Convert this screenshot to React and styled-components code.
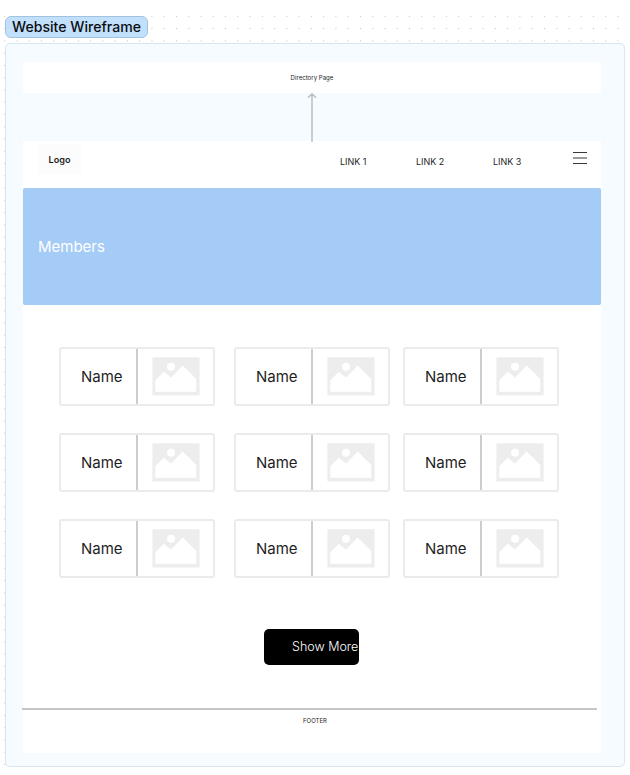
import React from "react";
import styled, { createGlobalStyle } from "styled-components";

const GlobalStyle = createGlobalStyle`
  * { box-sizing: border-box; }
  body { margin: 0; background: #fff; font-family: Inter, "Liberation Sans", sans-serif; color: #1e1e1e; }
`;

const Canvas = styled.main`
  width: 630px;
  height: 775px;
  padding: 15px 5px 8px 4px;
  overflow: hidden;
  background: radial-gradient(circle at center, #c6c6c6 0, #dcdcdc 0.6px, transparent 1px) -1.4px 10.2px / 12.28px 12.28px;
  background-clip: content-box;
  display: flex;
  flex-direction: column;
  align-items: flex-start;
`;

const SectionLabel = styled.h1`
  margin: 1px 0 5px 1px;
  height: 22px;
  width: 143px;
  border: 1px solid #a1c3df;
  border-radius: 6px;
  background: #c2e0fc;
  color: #0b0d10;
  display: flex;
  align-items: center;
  justify-content: center;
  font-size: 14.1px;
  font-weight: 550;
  line-height: 20px;
  white-space: nowrap;
`;

const Section = styled.section`
  width: 620px;
  height: 724px;
  margin-left: 1px;
  padding: 18px 17px 0;
  border: 1px solid #d4e6f1;
  border-radius: 5px;
  background: #f5fbff;
  display: flex;
  flex-direction: column;
  align-items: flex-start;
  flex: none;
`;

const DirectoryPage = styled.div`
  width: 578px;
  height: 31px;
  background: #fff;
  display: flex;
  align-items: center;
  justify-content: center;
  font-size: 6.1px;
`;

const Connector = styled.svg`
  display: block;
  width: 12px;
  height: 49px;
  margin: 0 0 -1px 283px;
  z-index: 1;
`;

const Page = styled.article`
  width: 578px;
  height: 612px;
  background: #fff;
  display: flex;
  flex-direction: column;
  flex: none;
`;

const Header = styled.header`
  height: 47px;
  padding: 3px 14px 0 15px;
  display: flex;
  justify-content: space-between;
  align-items: flex-start;
`;

const Logo = styled.div`
  width: 43px;
  height: 30px;
  background: #fcfcfc;
  display: flex;
  align-items: center;
  justify-content: center;
  font-size: 9.1px;
  font-weight: 600;
`;

const Nav = styled.nav`
  display: flex;
  align-items: flex-start;
`;

const NavLink = styled.a`
  width: ${({ $width }) => $width}px;
  padding-top: 12px;
  font-size: 9px;
  line-height: 12px;
`;

const MenuIcon = styled.svg`
  width: 14px;
  height: 14px;
  margin-top: 7px;
  display: block;
`;

const Hero = styled.div`
  height: 116.5px;
  padding: 1px 0 0 15px;
  border-radius: 2px;
  background: #a5cbf7;
  color: #fff;
  display: flex;
  align-items: center;
  font-size: 15px;
`;

const Members = styled.div`
  margin: 42.5px 0 0 36px;
  display: grid;
  grid-template-columns: 175px 169px 155px;
  grid-auto-rows: 59px;
  row-gap: 27px;
`;

const MemberCard = styled.div`
  width: 156px;
  height: 59px;
  border: 2px solid #ebebeb;
  border-radius: 3px;
  display: flex;
`;

const MemberName = styled.div`
  width: 77px;
  padding-left: 20px;
  border-right: 2px solid #cdcdcd;
  display: flex;
  align-items: center;
  font-size: 15px;
`;

const MemberPhoto = styled.svg`
  display: block;
  width: 48px;
  height: 39px;
  margin: 8px 0 0 14px;
`;

const ShowMore = styled.button`
  width: 95px;
  height: 36px;
  margin: 51px 0 0 241px;
  padding: 0 0 1px 28px;
  border: 0;
  border-radius: 5px;
  background: #000;
  color: #fff;
  font: 300 12.5px/16px Inter, "Liberation Sans", sans-serif;
  text-align: left;
  white-space: nowrap;
`;

const Footer = styled.footer`
  width: 575px;
  margin: 43px 0 0 -1px;
  padding: 7px 0 0 11px;
  border-top: 2px solid #c6c6c6;
  text-align: center;
  font-size: 6px;
  line-height: 8px;
`;

const members = Array.from({ length: 9 }, (_, id) => ({ id, name: "Name" }));

function Photo() {
  return (
    <MemberPhoto viewBox="0 0 48 39" aria-label="Photo">
      <path d="M.4.3h47.2v38.2H.4z" fill="#ededed" />
      <circle cx="19" cy="9.7" r="4" fill="#fff" />
      <path d="M3.3 34.8V23.3L11.8 14.8l7.3 5.7L30.7 8.6 44.3 22V34.8z" fill="#fff" />
    </MemberPhoto>
  );
}

export default function App() {
  return (
    <>
      <GlobalStyle />
      <Canvas>
        <SectionLabel>Website Wireframe</SectionLabel>
        <Section>
          <DirectoryPage>Directory Page</DirectoryPage>
          <Connector viewBox="0 0 12 49" fill="none" stroke="#b7babd" strokeWidth="1.4">
            <path d="M6 49V1M2 4.8 6 1l4 3.8" />
          </Connector>
          <Page>
            <Header>
              <Logo>Logo</Logo>
              <Nav>
                <NavLink $width={76}>LINK 1</NavLink>
                <NavLink $width={77}>LINK 2</NavLink>
                <NavLink $width={80}>LINK 3</NavLink>
                <MenuIcon viewBox="0 0 14 14" stroke="#383838" strokeWidth="1.1">
                  <path d="M0 1.5h14M0 7h14M0 12.5h14" />
                </MenuIcon>
              </Nav>
            </Header>
            <Hero>Members</Hero>
            <Members>
              {members.map(({ id, name }) => (
                <MemberCard key={id}>
                  <MemberName>{name}</MemberName>
                  <Photo />
                </MemberCard>
              ))}
            </Members>
            <ShowMore>Show More</ShowMore>
            <Footer>FOOTER</Footer>
          </Page>
        </Section>
      </Canvas>
    </>
  );
}
